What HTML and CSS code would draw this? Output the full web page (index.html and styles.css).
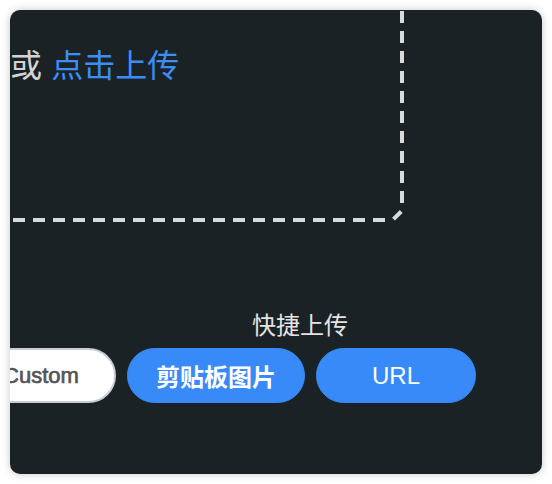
FILE: index.html
```html
<!DOCTYPE html>
<html lang="zh">
<head>
<meta charset="utf-8">
<title>上传</title>
<link rel="stylesheet" href="styles.css">
</head>
<body>
<div class="card">
  <div class="drop">
    <div class="drop-text"><span class="or">或</span> <span class="link">点击上传</span></div>
  </div>
  <div class="quick">
    <div class="quick-title">快捷上传</div>
    <div class="quick-buttons">
      <button class="btn btn-light">Custom</button>
      <button class="btn btn-primary btn-bold">剪贴板图片</button>
      <button class="btn btn-primary">URL</button>
    </div>
  </div>
</div>
</body>
</html>
```
FILE: styles.css
```css
html, body {
  margin: 0;
  padding: 0;
  background: #ffffff;
}
body {
  padding: 10px;
  font-family: "Liberation Sans", "Noto Sans CJK SC", sans-serif;
}
.card {
  width: 532px;
  height: 464px;
  box-sizing: border-box;
  background: #1b2225;
  border-radius: 10px;
  box-shadow: 0 0 8px rgba(0, 0, 0, 0.22);
  overflow: hidden;
}
.drop {
  box-sizing: border-box;
  margin: -40px 0 0 -400px;
  width: 794px;
  height: 252px;
  padding: 71px 0 0 400px;
  background: url("data:image/svg+xml,%3Csvg xmlns='http://www.w3.org/2000/svg' width='794' height='252'%3E%3Cg fill='none' stroke='%23dadada' stroke-width='4'%3E%3Cpath d='M792 1V233' stroke-dasharray='12 8'/%3E%3Cpath d='M3 250H775' stroke-dasharray='12 8'/%3E%3Cpath d='M2 240V12' stroke-dasharray='12 8'/%3E%3Cpath d='M12 2H782' stroke-dasharray='12 8'/%3E%3Cpath d='M783.5 249.2L791.2 241.5'/%3E%3C/g%3E%3C/svg%3E") no-repeat 0 0;
}
.drop-text {
  font-family: "Noto Sans CJK SC", sans-serif;
  font-size: 32px;
  line-height: 44px;
  white-space: nowrap;
}
.or {
  color: #d4d4d4;
}
.link {
  color: #3a8ef6;
  margin-left: 2px;
}
.quick {
  width: 580px;
  margin-top: 86px;
}
.quick-title {
  text-align: center;
  font-family: "Noto Sans CJK SC", sans-serif;
  font-size: 24px;
  line-height: 32px;
  color: #e4e4e4;
}
.quick-buttons {
  display: flex;
  gap: 11px;
  margin: 8px 0 0 -54px;
}
.btn {
  box-sizing: border-box;
  flex: none;
  min-width: 160px;
  height: 55px;
  padding: 0 28px;
  border-radius: 28px;
  font-family: "Liberation Sans", "Noto Sans CJK SC", sans-serif;
  font-size: 24px;
  white-space: nowrap;
  cursor: pointer;
}
.btn-light {
  background: #ffffff;
  color: #555555;
  border: 2px solid #c8ccd3;
  font-size: 22px;
  padding-left: 38px;
  -webkit-text-stroke: 0.7px #555555;
}
.btn-primary {
  background: #378af7;
  color: #ffffff;
  border: 1px solid #378af7;
}
.btn-bold {
  font-weight: bold;
}
```
